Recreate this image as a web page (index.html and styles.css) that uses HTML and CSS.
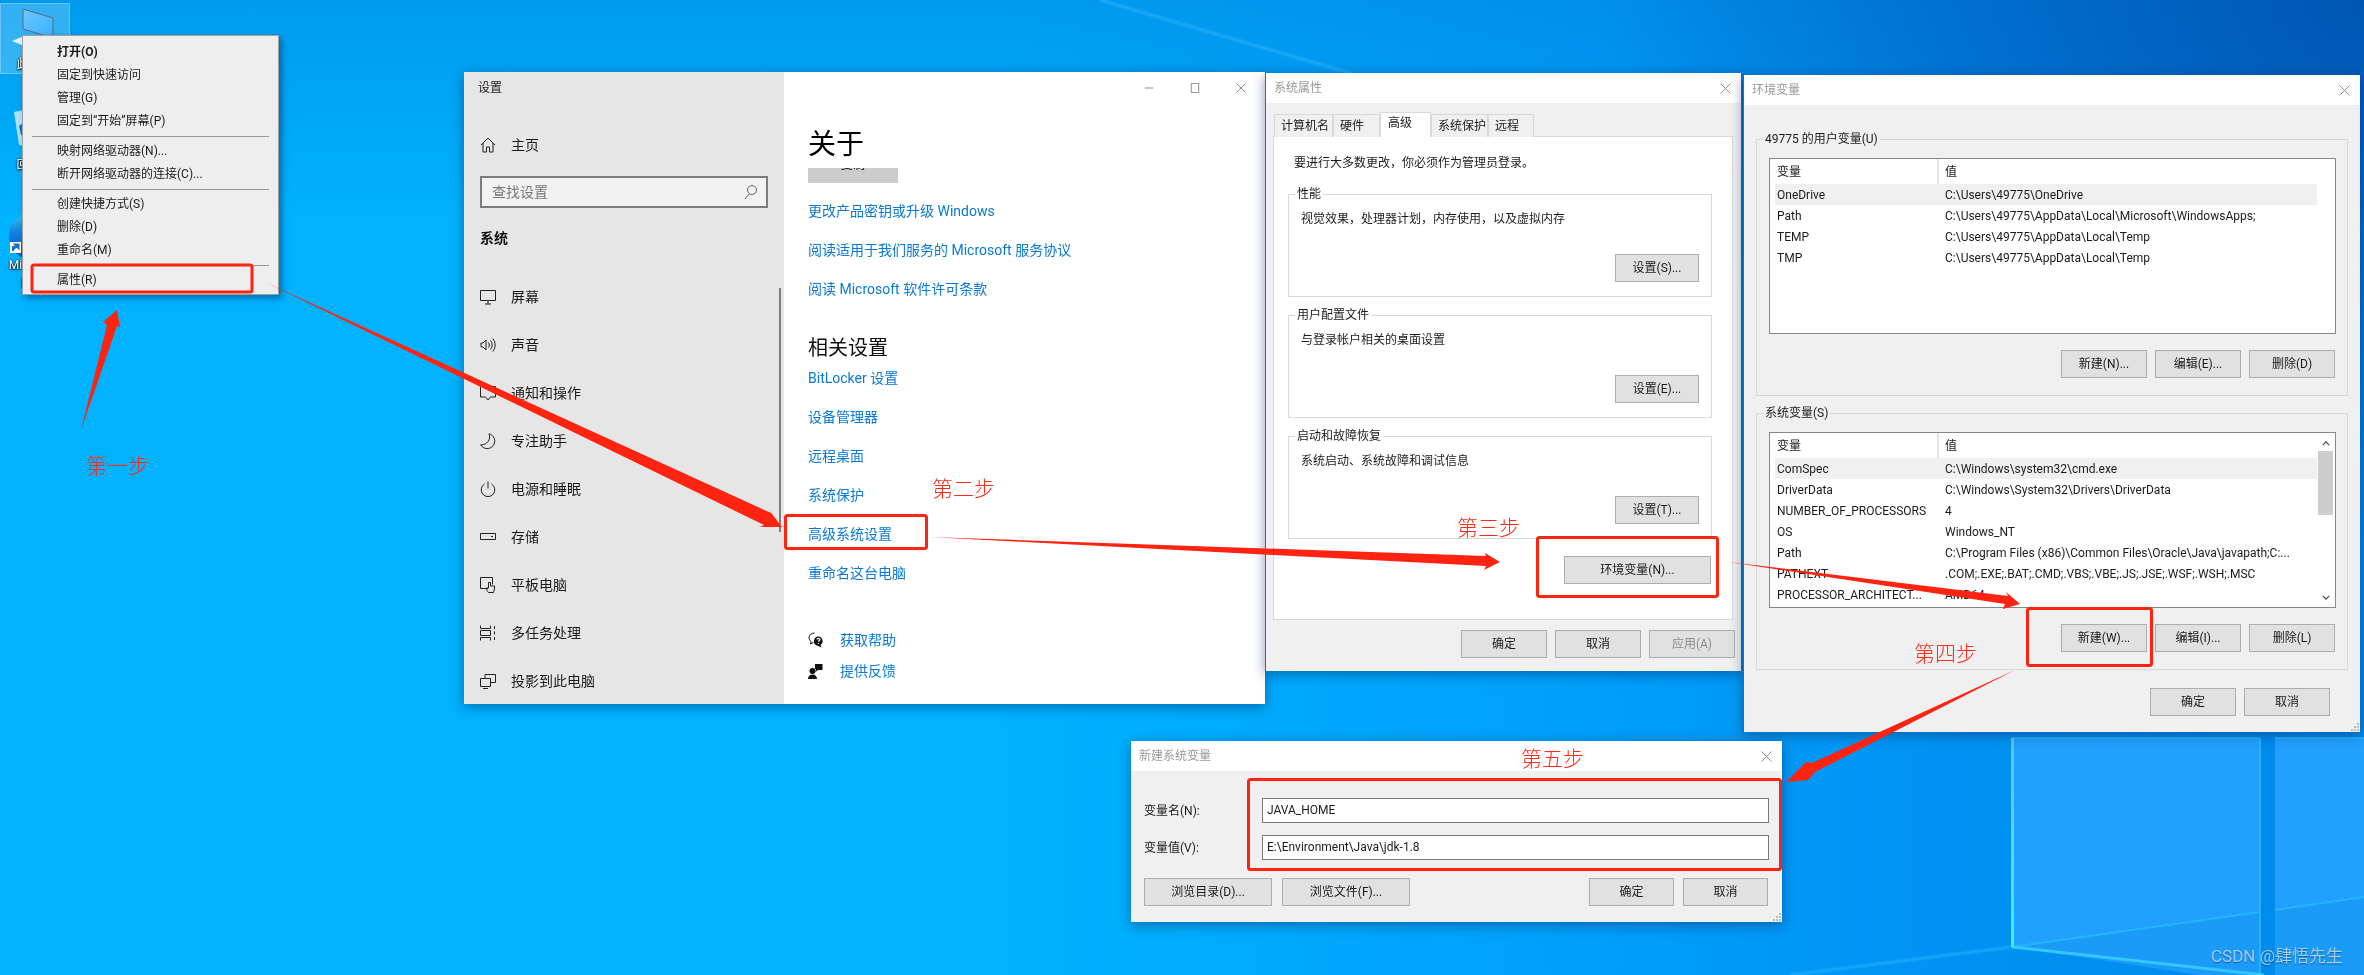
FILE: index.html
```html
<!DOCTYPE html>
<html lang="zh-CN">
<head>
<meta charset="utf-8">
<title>环境变量配置步骤</title>
<link rel="stylesheet" href="styles.css">
</head>
<body>
<div class="desktop">
  <svg class="canvas" viewBox="0 0 2364 975" aria-hidden="true">
    <defs>
      <linearGradient id="edge" x1="0" y1="0" x2="0" y2="1"><stop offset="0" stop-color="#5cc4ff"/><stop offset="1" stop-color="#3df0ff"/></linearGradient>
      <linearGradient id="pc" x1="0" y1="0" x2="1" y2="1"><stop offset="0" stop-color="#6cc8ff"/><stop offset="1" stop-color="#3ab0ff"/></linearGradient>
      <linearGradient id="edgeicon" x1="0" y1="0" x2="0" y2="1"><stop offset="0" stop-color="#35c8e0"/><stop offset=".45" stop-color="#0f7fe0"/><stop offset="1" stop-color="#0a52c0"/></linearGradient>
      <filter id="soft"><feGaussianBlur stdDeviation="1"/></filter>
    </defs>
    <path class="beam" d="M1100 0 L1360 76"/>
    <path class="floor" d="M1790 975 L2012 947"/>
    <polygon class="pane" points="2012,738 2260,738 2260,912 2012,947"/>
    <polygon class="pane-low" points="2012,947 2260,912 2260,975 2200,975"/>
    <polygon class="pane" points="2275,738 2364,738 2364,897 2275,910"/>
    <polygon class="pane-low" points="2275,910 2364,897 2364,975 2275,975"/>
    <path class="pane-line" d="M2012 947 L2260 912 M2275 910 L2364 897 M2260 738 V975 M2012 738 H2260 M2275 738 H2364"/>
    <path class="pane-diag" d="M2012 947 L2264 975"/>
    <rect class="pane-edge" x="2011" y="738" width="3" height="209" fill="url(#edge)"/>
    <rect class="sel" x="0.5" y="3.5" width="69" height="70"/>
    <polygon class="pc" points="23,9 53,18 53,38 23,29" fill="url(#pc)"/>
    <polygon class="pc-base" points="12,41 24,36 24,46"/>
    <polygon class="bin" points="14,112 24,110 24,146 19,145"/>
    <polygon class="bin-mark" points="19,126 24,122 24,136 21,135"/>
    <circle cx="33" cy="236" r="24" fill="url(#edgeicon)"/>
    <rect class="shortcut" x="10" y="242" width="11" height="11"/>
    <path class="shortcut-arrow" d="M13 251 V247 H17 M15 244.500 H18.500 V248 Z"/>
  </svg>

  <span class="desk-label desk-pc">此电脑</span>
  <span class="desk-label desk-bin">回收站</span>
  <span class="desk-label desk-edge">Microsoft Edge</span>

  <section class="win settings">
    <aside class="side">
      <div class="side-title">设置</div>
      <div class="nav-item home"><svg class="ico" viewBox="0 0 16 16"><path d="M1 8 8 1l7 7M3 6v9h3.500v-5h3v5H13V6"/></svg><span>主页</span></div>
      <div class="search"><span>查找设置</span><svg class="ico-search" viewBox="0 0 16 16"><circle cx="10" cy="6" r="4.500"/><path d="M7 10 3 15"/></svg></div>
      <div class="side-head">系统</div>
      <div class="nav">
        <div class="nav-item"><svg class="ico" viewBox="0 0 16 16"><path d="M.5 1.500h15v10H.5zM8 11.500V15M5 15h6"/></svg><span>屏幕</span></div>
        <div class="nav-item"><svg class="ico" viewBox="0 0 16 16"><path d="M1 6v4h2l3 3V3L3 6zM8.500 5.500a4 4 0 0 1 0 5M10.500 3.500a7 7 0 0 1 0 9M12.800 1.500a10 10 0 0 1 0 13"/></svg><span>声音</span></div>
        <div class="nav-item"><svg class="ico" viewBox="0 0 16 16"><path d="M.5 1.500h15v10.500h-5L8 15l-2.500-3H.5z"/></svg><span>通知和操作</span></div>
        <div class="nav-item"><svg class="ico" viewBox="0 0 16 16"><path d="M9 .8a7.500 7.500 0 1 1-8.300 11 8 8 0 0 0 8.300-11z"/></svg><span>专注助手</span></div>
        <div class="nav-item"><svg class="ico" viewBox="0 0 16 16"><path d="M8 .5v7M4.500 3a6.800 6.800 0 1 0 7 0"/></svg><span>电源和睡眠</span></div>
        <div class="nav-item"><svg class="ico" viewBox="0 0 16 16"><path d="M.5 4.500h15v6H.5zM11 7.500h2"/></svg><span>存储</span></div>
        <div class="nav-item"><svg class="ico" viewBox="0 0 16 16"><path d="M8 11.500H.5V.5h12v7M8.500 15.500c-1.500-1.500-2-3-2-4.500h2V5.500h2V9h4v3l-1 3.500z"/></svg><span>平板电脑</span></div>
        <div class="nav-item"><svg class="ico" viewBox="0 0 16 16"><path d="M.5.500v3h10v-3M.5 15.500v-3h10v3M.5 5.500h10v5H.5zM14.500 1v3M14.500 6.500v3M14.500 12v3"/></svg><span>多任务处理</span></div>
        <div class="nav-item"><svg class="ico" viewBox="0 0 16 16"><path d="M5 5V1.500h10.500v8H11M.5 5.500h10v8H.5zM3 15.500h5"/></svg><span>投影到此电脑</span></div>
      </div>
      <div class="side-scroll"></div>
    </aside>
    <main class="pane-main">
      <div class="caption">
        <span class="cap-btn"><svg viewBox="0 0 12 12"><path d="M1 6h10"/></svg></span>
        <span class="cap-btn"><svg viewBox="0 0 12 12"><path d="M1.500.500h9v11h-9z"/></svg></span>
        <span class="cap-btn"><svg viewBox="0 0 12 12"><path d="M.5.500l11 11M11.500.500l-11 11"/></svg></span>
      </div>
      <h1 class="about">关于</h1>
      <div class="copy-btn"><span>复制</span></div>
      <nav class="links links-top">
        <a>更改产品密钥或升级 Windows</a>
        <a>阅读适用于我们服务的 Microsoft 服务协议</a>
        <a>阅读 Microsoft 软件许可条款</a>
      </nav>
      <h2 class="related">相关设置</h2>
      <nav class="links">
        <a>BitLocker 设置</a>
        <a>设备管理器</a>
        <a>远程桌面</a>
        <a>系统保护</a>
        <a>高级系统设置</a>
        <a>重命名这台电脑</a>
      </nav>
      <div class="help">
        <a class="help-row"><svg class="help-ico" viewBox="0 0 16 16"><path class="outline" d="M6.500 1C3.500 1 1 3 1 5.700c0 1.600.9 3 2.200 3.800L2.500 12l3-1.600"/><path class="filled" d="M10.500 4.500a4.700 4.700 0 0 0-1.500 9.100l4.500 2-1-2.500a4.700 4.700 0 0 0-2-8.600z"/><path class="qmark" d="M9 7.500c0-1.500 3-1.500 3 0 0 1.200-1.500 1-1.500 2.300M10.500 11v1"/></svg><span>获取帮助</span></a>
        <a class="help-row"><svg class="help-ico" viewBox="0 0 16 16"><circle class="filled" cx="4.500" cy="8" r="3"/><path class="filled" d="M0 16c0-3 2-4.500 4.500-4.500S9 13 9 16z"/><path class="filled" d="M7 1h7.500v6H10L7.500 9l.5-3H7z"/></svg><span>提供反馈</span></a>
      </div>
    </main>
  </section>

  <section class="win dialog sysprops">
    <header class="dlg-title"><span>系统属性</span><svg class="dlg-x" viewBox="0 0 12 12"><path d="M.5.500l11 11M11.500.500l-11 11"/></svg></header>
    <div class="sys-body">
      <div class="tabs">
        <span class="tab t1">计算机名</span>
        <span class="tab t2">硬件</span>
        <span class="tab t3 active">高级</span>
        <span class="tab t4">系统保护</span>
        <span class="tab t5">远程</span>
      </div>
      <div class="tab-panel">
        <p class="admin-note">要进行大多数更改，你必须作为管理员登录。</p>
        <fieldset class="group sys-group">
          <legend>性能</legend>
          <p>视觉效果，处理器计划，内存使用，以及虚拟内存</p>
          <button class="btn btn-84">设置(S)...</button>
        </fieldset>
        <fieldset class="group sys-group">
          <legend>用户配置文件</legend>
          <p>与登录帐户相关的桌面设置</p>
          <button class="btn btn-84">设置(E)...</button>
        </fieldset>
        <fieldset class="group sys-group">
          <legend>启动和故障恢复</legend>
          <p>系统启动、系统故障和调试信息</p>
          <button class="btn btn-84">设置(T)...</button>
        </fieldset>
        <button class="btn btn-env">环境变量(N)...</button>
      </div>
      <div class="sys-foot">
        <button class="btn btn-86">确定</button>
        <button class="btn btn-86">取消</button>
        <button class="btn btn-86 disabled">应用(A)</button>
      </div>
    </div>
  </section>

  <section class="win dialog envvars">
    <header class="dlg-title"><span>环境变量</span><svg class="dlg-x" viewBox="0 0 12 12"><path d="M.5.500l11 11M11.500.500l-11 11"/></svg></header>
    <div class="env-body">
      <fieldset class="group env-group">
        <legend>49775 的用户变量(U)</legend>
        <div class="list">
          <div class="list-table">
            <div class="row head"><span>变量</span><span>值</span></div>
            <div class="row sel-row"><span>OneDrive</span><span>C:\Users\49775\OneDrive</span></div>
            <div class="row"><span>Path</span><span>C:\Users\49775\AppData\Local\Microsoft\WindowsApps;</span></div>
            <div class="row"><span>TEMP</span><span>C:\Users\49775\AppData\Local\Temp</span></div>
            <div class="row"><span>TMP</span><span>C:\Users\49775\AppData\Local\Temp</span></div>
          </div>
        </div>
        <div class="env-actions">
          <button class="btn btn-86">新建(N)...</button>
          <button class="btn btn-86">编辑(E)...</button>
          <button class="btn btn-86">删除(D)</button>
        </div>
      </fieldset>
      <fieldset class="group env-group">
        <legend>系统变量(S)</legend>
        <div class="list">
          <div class="list-table">
            <div class="row head"><span>变量</span><span>值</span></div>
            <div class="row sel-row"><span>ComSpec</span><span>C:\Windows\system32\cmd.exe</span></div>
            <div class="row"><span>DriverData</span><span>C:\Windows\System32\Drivers\DriverData</span></div>
            <div class="row"><span>NUMBER_OF_PROCESSORS</span><span>4</span></div>
            <div class="row"><span>OS</span><span>Windows_NT</span></div>
            <div class="row"><span>Path</span><span>C:\Program Files (x86)\Common Files\Oracle\Java\javapath;C:...</span></div>
            <div class="row"><span>PATHEXT</span><span>.COM;.EXE;.BAT;.CMD;.VBS;.VBE;.JS;.JSE;.WSF;.WSH;.MSC</span></div>
            <div class="row"><span>PROCESSOR_ARCHITECT...</span><span>AMD64</span></div>
          </div>
          <div class="scrollbar">
            <svg class="sb-arrow" viewBox="0 0 10 6"><path d="M1 5l4-4 4 4"/></svg>
            <div class="sb-thumb"></div>
            <svg class="sb-arrow sb-down" viewBox="0 0 10 6"><path d="M1 1l4 4 4-4"/></svg>
          </div>
        </div>
        <div class="env-actions">
          <button class="btn btn-86">新建(W)...</button>
          <button class="btn btn-86">编辑(I)...</button>
          <button class="btn btn-86">删除(L)</button>
        </div>
      </fieldset>
      <div class="env-foot">
        <button class="btn btn-86">确定</button>
        <button class="btn btn-86">取消</button>
      </div>
    </div>
    <svg class="grip" viewBox="0 0 8 8"><path d="M6 0h2v2H6zM3 3h2v2H3zM6 3h2v2H6zM0 6h2v2H0zM3 6h2v2H3zM6 6h2v2H6z"/></svg>
  </section>

  <section class="win dialog newvar">
    <header class="dlg-title"><span>新建系统变量</span><svg class="dlg-x" viewBox="0 0 12 12"><path d="M.5.500l11 11M11.500.500l-11 11"/></svg></header>
    <div class="new-body">
      <div class="form">
        <label>变量名(N):</label><div class="field">JAVA_HOME</div>
        <label>变量值(V):</label><div class="field">E:\Environment\Java\jdk-1.8</div>
      </div>
      <div class="new-foot">
        <button class="btn btn-128">浏览目录(D)...</button>
        <button class="btn btn-128">浏览文件(F)...</button>
        <button class="btn btn-85 push">确定</button>
        <button class="btn btn-85">取消</button>
      </div>
    </div>
    <svg class="grip" viewBox="0 0 8 8"><path d="M6 0h2v2H6zM3 3h2v2H3zM6 3h2v2H6zM0 6h2v2H0zM3 6h2v2H3zM6 6h2v2H6z"/></svg>
  </section>

  <div class="menu">
    <div class="mi strong">打开(O)</div>
    <div class="mi">固定到快速访问</div>
    <div class="mi">管理(G)</div>
    <div class="mi">固定到“开始”屏幕(P)</div>
    <div class="msep"></div>
    <div class="mi">映射网络驱动器(N)...</div>
    <div class="mi">断开网络驱动器的连接(C)...</div>
    <div class="msep"></div>
    <div class="mi">创建快捷方式(S)</div>
    <div class="mi">删除(D)</div>
    <div class="mi">重命名(M)</div>
    <div class="msep"></div>
    <div class="mi">属性(R)</div>
  </div>

  <svg class="canvas marks" viewBox="0 0 2364 975" aria-hidden="true">
    <rect class="box" x="32" y="265" width="220" height="27"/>
    <rect class="box" x="785.500" y="515.500" width="141" height="33"/>
    <rect class="box" x="1537.500" y="537.500" width="180" height="59"/>
    <rect class="box" x="2027.500" y="608.500" width="124" height="57"/>
    <rect class="box" x="1248.500" y="779.500" width="532" height="90"/>
    <polygon class="arrow" points="81,430 107,325 103,322 117,310 120,327 117,326"/>
    <polygon class="arrow" points="267,283 771,513 769,510 782,527 760,527 764,525"/>
    <polygon class="arrow" points="929,537 1486,556 1485,553 1500,562 1484,570 1486,566"/>
    <polygon class="arrow" points="1729,562 2008,596 2006,592 2020,604 2003,609 2005,604"/>
    <polygon class="arrow" points="2015,670 1812,763 1806,762 1786,782 1808,780 1815,772"/>
  </svg>

  <span class="step s1">第一步</span>
  <span class="step s2">第二步</span>
  <span class="step s3">第三步</span>
  <span class="step s4">第四步</span>
  <span class="step s5">第五步</span>
  <span class="watermark">CSDN @肆悟先生</span>
</div>
</body>
</html>
```
FILE: styles.css
```css
* { box-sizing: border-box; }
html, body { margin: 0; padding: 0; height: 100%; }
body { overflow: hidden; }

.desktop {
  position: relative;
  width: 2364px;
  height: 975px;
  overflow: hidden;
  font: 12px/18px Roboto, "Noto Sans CJK SC", sans-serif;
  color: #1a1a1a;
  filter: blur(.3px);
  background:
    radial-gradient(760px 560px at 100% 0, #0056b4 0%, rgba(0, 90, 190, 0) 100%),
    linear-gradient(180deg, rgba(0, 120, 215, .4) 0, rgba(0, 120, 215, 0) 220px),
    linear-gradient(90deg, #00b2ff 0, #00b2ff 1000px, #00a2fb 1500px, #0092f2 1950px, #0088ea 2364px);
}

.canvas { position: absolute; left: 0; top: 0; width: 2364px; height: 975px; }
.marks { z-index: 20; pointer-events: none; }

.beam { stroke: #3cbcff; stroke-width: 3; fill: none; opacity: .5; filter: url(#soft); }
.floor { stroke: #22b0ff; stroke-width: 2; fill: none; filter: url(#soft); }
.pane { fill: #22a0ff; }
.pane-low { fill: #1a9bf8; }
.pane-line { stroke: #29baff; stroke-width: 2; fill: none; opacity: .8; }
.pane-diag { stroke: #35c6ff; stroke-width: 3; fill: none; }
.sel { fill: rgba(255, 255, 255, .2); stroke: rgba(255, 255, 255, .35); }
.pc { stroke: #5a6a7a; stroke-width: 1; }
.pc-base { fill: #e6f4ff; }
.bin { fill: #cfeaff; opacity: .85; }
.bin-mark { fill: #1670d0; }
.shortcut { fill: #fff; }
.shortcut-arrow { stroke: #1a6fc8; stroke-width: 2; fill: #1a6fc8; }

.desk-label {
  position: absolute;
  left: 0;
  width: 69px;
  text-align: center;
  color: #fff;
  text-shadow: 0 1px 2px #000, 0 0 2px #000;
}
.desk-pc { top: 55px; }
.desk-bin { top: 156px; }
.desk-edge { top: 256px; }

.win { position: absolute; box-shadow: 0 3px 12px rgba(0, 30, 80, .45); }
.settings {
  left: 464px; top: 72px; width: 801px; height: 632px;
  display: grid;
  grid-template-columns: 320px 1fr;
  background: #fff;
  overflow: hidden;
  z-index: 1;
}

.side { position: relative; background: #e6e6e6; padding-left: 16px; }
.side-title { height: 32px; margin-left: -2px; line-height: 32px; }
.nav-item { display: flex; align-items: center; gap: 15px; height: 48px; font-size: 14px; }
.home { margin-top: 17px; }
.ico { width: 16px; height: 16px; flex: none; fill: none; stroke: #222; stroke-width: 1; overflow: visible; }
.search {
  display: flex; align-items: center; justify-content: space-between;
  width: 288px; height: 32px; margin-top: 7px; padding: 0 8px 0 10px;
  border: 2px solid #7c7c7c; background: #f2f2f2; color: #777; font-size: 14px;
}
.ico-search { width: 16px; height: 16px; fill: none; stroke: #666; stroke-width: 1; }
.side-head { margin-top: 20px; height: 20px; line-height: 20px; font-size: 14px; font-weight: 700; color: #111; }
.nav { margin-top: 25px; }
.side-scroll { position: absolute; left: 315px; top: 216px; width: 2px; height: 244px; background: #7f7f7f; }

.pane-main { padding-left: 24px; }
.caption { display: flex; justify-content: flex-end; height: 32px; padding-right: 1px; }
.cap-btn { display: flex; align-items: center; justify-content: center; width: 46px; }
.cap-btn svg { width: 10px; height: 10px; fill: none; stroke: #777; stroke-width: 1; }
.about { margin: 21px 0 0; font-size: 28px; font-weight: 400; line-height: 40px; color: #000; }
.copy-btn { width: 90px; height: 15px; margin-top: 3px; overflow: hidden; background: #ccc; text-align: center; color: #111; }
.copy-btn span { display: block; margin-top: -12px; }
.links { display: flex; flex-direction: column; gap: 15px; }
.links a, .help-row { height: 24px; line-height: 24px; font-size: 14px; color: #0a78d4; }
.links-top { margin-top: 16px; }
.related { margin: 33px 0 4px; height: 28px; font-size: 20px; font-weight: 400; line-height: 28px; color: #111; }
.help { display: flex; flex-direction: column; gap: 7px; margin-top: 43px; }
.help-row { display: flex; align-items: center; gap: 16px; }
.help-ico { width: 16px; height: 16px; flex: none; }
.help-ico .outline { fill: none; stroke: #111; stroke-width: 1; }
.help-ico .filled { fill: #111; }
.help-ico .qmark { fill: none; stroke: #fff; stroke-width: 1.200; }

.dialog { background: #f0f0f0; }
.dlg-title {
  display: flex; align-items: center; justify-content: space-between;
  height: 30px; padding: 0 10px 0 8px; background: #fff; color: #999;
}
.dlg-x { width: 11px; height: 11px; fill: none; stroke: #888; stroke-width: 1; }

.sysprops { left: 1265px; top: 73px; width: 477px; height: 598px; border-left: 1px solid #2a6ca5; border-right: 1px solid #2a6ca5; z-index: 2; }
.sys-body { padding: 10px 6px 0 7px; }
.tabs { position: relative; z-index: 1; display: flex; align-items: flex-end; height: 24px; margin-bottom: -1px; padding-left: 1px; }
.tab { height: 23px; padding-left: 6px; line-height: 23px; border: 1px solid #d9d9d9; border-bottom: 0; border-left-width: 1px; background: #f0f0f0; }
.t1 { width: 59px; }
.t2 { width: 47px; }
.t3 { width: 51px; }
.t4 { width: 57px; }
.t5 { width: 46px; }
.tab.active { height: 25px; line-height: 21px; background: #fff; padding-left: 7px; }
.tab-panel { display: flex; flex-direction: column; height: 484px; margin-right: 2px; padding: 17px 20px 0 14px; border: 1px solid #d9d9d9; background: #fff; }
.admin-note { margin: 0 0 13px 6px; }
.group { margin: 0; min-width: 0; border: 1px solid #d9d9d9; }
.group legend { margin-left: -6px; padding: 0 2px; }
.group p { margin: 0; }
.sys-group { display: flex; flex-direction: column; height: 112px; margin-bottom: 9px; padding: 7px 12px 0; }
.sys-group .btn { display: block; margin: 26px 0 0 auto; }
.btn { height: 28px; padding: 0; border: 1px solid #adadad; background: #e1e1e1; color: #1a1a1a; font: inherit; }
.btn-84 { width: 84px; }
.btn-85 { width: 85px; }
.btn-86 { width: 86px; }
.btn-128 { width: 128px; }
.btn-env { align-self: flex-end; width: 147px; margin: 8px 1px 0 0; }
.disabled { color: #8a8a8a; }
.sys-foot { display: flex; justify-content: flex-end; gap: 8px; margin-top: 10px; }

.envvars { left: 1743px; top: 75px; width: 617px; height: 657px; border-left: 1px solid #2a6ca5; z-index: 3; }
.env-body { padding: 25px 12px 0; }
.env-group { height: 266px; margin-bottom: 8px; padding: 10px 11px 0 12px; }
.list { display: flex; height: 176px; padding-left: 5px; border: 1px solid #828790; background: #fff; overflow: hidden; }
.list-table { flex: none; width: 542px; }
.row { display: grid; grid-template-columns: 164px 1fr; height: 21px; line-height: 22px; }
.row span { padding-left: 2px; white-space: nowrap; overflow: hidden; }
.row span + span { padding-left: 6px; }
.row.head { height: 25px; line-height: 26px; }
.row.head span:first-child { border-right: 2px solid #e5e5e5; }
.sel-row { background: #f0f0f0; }
.scrollbar { flex: 1; display: flex; flex-direction: column; align-items: center; padding: 8px 2px 0 1px; }
.sb-arrow { width: 8px; height: 5px; flex: none; fill: none; stroke: #444; stroke-width: 1.500; }
.sb-thumb { width: 100%; height: 64px; margin-top: 5px; background: #cdcdcd; }
.sb-down { margin-top: 80px; }
.env-actions { display: flex; justify-content: flex-end; gap: 8px; margin: 16px 1px 0 0; }
.env-foot { display: flex; justify-content: flex-end; gap: 8px; margin: 18px 18px 0 0; }
.grip { position: absolute; right: 1px; bottom: 1px; width: 8px; height: 8px; fill: #bdbdbd; }

.newvar { left: 1131px; top: 741px; width: 651px; height: 181px; z-index: 4; }
.new-body { padding: 27px 14px 0 13px; }
.form { display: grid; grid-template-columns: 118px 507px; row-gap: 12px; align-items: center; }
.form label { color: #1a1a1a; }
.field { height: 25px; padding-left: 4px; line-height: 23px; border: 1px solid #7a7a7a; background: #fff; }
.new-foot { display: flex; gap: 10px; margin-top: 18px; }
.push { margin-left: auto; }
.new-foot .push + .btn { margin-left: -1px; }

.menu {
  position: absolute; left: 22px; top: 35px; width: 257px; height: 260px;
  padding: 5px 9px 0;
  border: 1px solid #a0a0a0;
  background: #eee;
  box-shadow: 3px 3px 6px rgba(0, 40, 90, .5);
  z-index: 10;
}
.mi { height: 23px; padding-left: 25px; line-height: 23px; white-space: nowrap; }
.strong { font-weight: 700; }
.msep { height: 1px; margin: 2.500px 0 3.500px; background: #999; }

.box { fill: none; stroke: #ff2311; stroke-width: 3; rx: 2px; }
.arrow { fill: #ff2311; }

.step {
  position: absolute;
  z-index: 21;
  font-size: 21px;
  line-height: 28px;
  font-weight: 300;
  color: #ff2a1a;
}
.s1 { left: 86px; top: 452px; }
.s2 { left: 932px; top: 475px; }
.s3 { left: 1457px; top: 514px; }
.s4 { left: 1914px; top: 640px; }
.s5 { left: 1521px; top: 745px; }

.watermark {
  position: absolute;
  left: 2211px; top: 945px;
  z-index: 21;
  font-size: 17px;
  line-height: 22px;
  color: rgba(255, 255, 255, .62);
  text-shadow: 0 1px 1px rgba(0, 50, 110, .6);
  white-space: nowrap;
}
```
